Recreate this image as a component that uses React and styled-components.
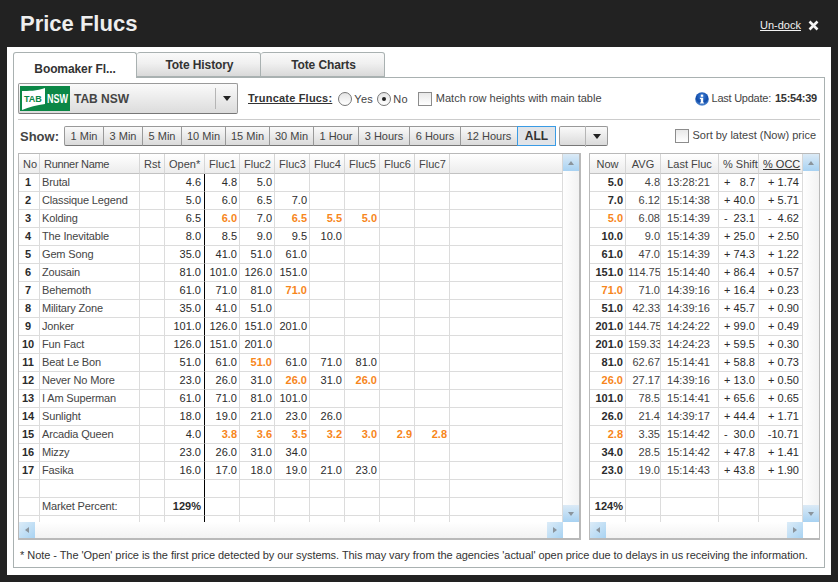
import React from 'react';
import styled, { createGlobalStyle, css } from 'styled-components';

const GlobalStyle = createGlobalStyle`
  html, body { margin: 0; padding: 0; background: #222; }
  body { font-family: "Liberation Sans", Arial, sans-serif; font-size: 11px; color: #333; }
`;

const Page = styled.div`
  width: 838px;
  height: 582px;
  background: #222;
  overflow: hidden;
`;

const Header = styled.header`
  height: 47px;
  display: flex;
  align-items: center;
  justify-content: space-between;
  padding: 0 19px 0 20px;
  box-sizing: border-box;
`;

const Title = styled.h1`
  margin: 1px 0 0;
  font-size: 22px;
  font-weight: bold;
  color: #eee;
`;

const HeaderActions = styled.div`
  display: flex;
  align-items: center;
  gap: 7px;
  margin-top: 3px;
`;

const UndockLink = styled.a`
  color: #f2f2f2;
  font-size: 11px;
  text-decoration: underline;
`;

const Panel = styled.main`
  width: 824px;
  height: 528px;
  margin-left: 7px;
  padding: 5px 6px 7px;
  box-sizing: border-box;
  background: #fff;
  display: flex;
  flex-direction: column;
`;

const TabBar = styled.div`
  display: flex;
  height: 25px;
  flex: none;
  position: relative;
  z-index: 1;
`;

const Tab = styled.div`
  width: 124px;
  box-sizing: border-box;
  text-align: center;
  font-size: 12px;
  font-weight: bold;
  letter-spacing: -0.1px;
  color: #333;
  border: 1px solid #a9b1b1;
  border-radius: 3px 3px 0 0;
  white-space: nowrap;
  ${(p) => (p.$active
    ? css`
      height: 26px;
      padding-top: 9px;
      background: #fff;
      border-bottom: none;
    `
    : css`
      height: 25px;
      padding: 5px 0 0 2px;
      border-left: none;
      background: linear-gradient(#fafafa, #f0f0f0 45%, #d9d9d9);
    `)}
`;

const TabBody = styled.section`
  flex: 1;
  min-height: 0;
  border: 1px solid #a9b1b1;
  padding: 5px 4px 0;
  display: flex;
  flex-direction: column;
`;

const OptionsRow = styled.div`
  height: 31px;
  display: flex;
  align-items: center;
  flex: none;
`;

const BookieSelect = styled.div`
  width: 220px;
  height: 31px;
  box-sizing: border-box;
  border: 1px solid #9a9a9a;
  border-bottom-color: #777;
  border-radius: 2px;
  background: linear-gradient(#fafafa, #dcdcdc);
  display: flex;
  align-items: center;
  padding-left: 1px;
  gap: 4px;
`;

const BookieName = styled.span`
  flex: 1;
  font-size: 12px;
  font-weight: bold;
  color: #444;
`;

const SelectArrow = styled.span`
  width: 21px;
  height: 21px;
  border-left: 1px solid #b5b5b5;
  display: flex;
  align-items: center;
  justify-content: center;
  &::after {
    content: '';
    border-left: 4px solid transparent;
    border-right: 4px solid transparent;
    border-top: 5px solid #222;
  }
`;

const TruncateLabel = styled.span`
  margin: 0 0 1px 10px;
  font-weight: bold;
  font-size: 11px;
  letter-spacing: 0.2px;
  color: #333;
  text-decoration: underline;
`;

const Radio = styled.span`
  width: 12px;
  height: 12px;
  margin: 0 2px 0 ${(p) => (p.$checked ? 4 : 6)}px;
  border: 1px solid #777;
  border-radius: 50%;
  background: linear-gradient(#e4e4e4, #fff);
  display: inline-flex;
  align-items: center;
  justify-content: center;
  ${(p) => p.$checked && css`
    &::after {
      content: '';
      width: 4px;
      height: 4px;
      border-radius: 50%;
      background: #222;
    }
  `}
`;

const Check = styled.span`
  width: 12px;
  height: 12px;
  flex: none;
  border: 1px solid #8c8c8c;
  background: linear-gradient(#e8e8e8, #fff);
  margin-right: 4px;
`;

const OptionText = styled.span`
  color: #444;
  font-size: 11px;
  white-space: nowrap;
  margin-bottom: 2px;
`;

const RadioText = styled(OptionText)`
  letter-spacing: 0.3px;
  margin-bottom: 0;
`;

const UpdateLabel = styled(OptionText)`
  letter-spacing: -0.25px;
`;

const MatchOption = styled.div`
  display: flex;
  align-items: center;
  margin-left: 10px;
`;

const LastUpdate = styled.div`
  margin-left: auto;
  margin-right: 3px;
  display: flex;
  align-items: center;
  gap: 3px;
`;

const UpdateTime = styled.b`
  font-size: 11px;
  letter-spacing: -0.25px;
  color: #333;
  margin: 0 0 2px 1px;
`;

const Divider = styled.hr`
  flex: none;
  width: 100%;
  margin: 5px 0 6px;
  border: none;
  border-top: 1px solid #ccc;
`;

const ShowRow = styled.div`
  height: 20px;
  flex: none;
  display: flex;
  align-items: center;
`;

const ShowLabel = styled.span`
  width: 46px;
  padding-left: 2px;
  box-sizing: border-box;
  font-size: 13px;
  font-weight: bold;
  color: #444;
`;

const RangeGroup = styled.div`
  display: flex;
  height: 20px;
`;

const RangeButton = styled.div`
  width: ${(p) => p.$w}px;
  box-sizing: border-box;
  display: flex;
  align-items: center;
  justify-content: center;
  border: 1px solid #999;
  border-bottom-color: #777;
  margin-left: -1px;
  background: linear-gradient(#fafafa, #dadada);
  font-size: 11px;
  color: #444;
  &:first-child { margin-left: 0; border-radius: 2px 0 0 2px; }
  ${(p) => p.$active && css`
    position: relative;
    border-color: #3a9be4;
    background: #e1e4e8;
    font-weight: bold;
    font-size: 12px;
    color: #333;
  `}
`;

const RangeSelect = styled.div`
  width: 49px;
  height: 20px;
  box-sizing: border-box;
  margin-left: 3px;
  border: 1px solid #999;
  border-bottom-color: #777;
  border-radius: 2px;
  background: linear-gradient(#fafafa, #dadada);
  display: flex;
  align-items: center;
  justify-content: flex-end;
`;

const SortOption = styled.div`
  margin-left: auto;
  margin-right: 4px;
  display: flex;
  align-items: center;
`;

const GridsRow = styled.div`
  height: 387px;
  flex: none;
  margin-top: 7px;
  display: flex;
  gap: 8px;
`;

const GridFrame = styled.div`
  width: ${(p) => p.$w}px;
  box-sizing: border-box;
  border: 1px solid #b9b9b9;
  border-right-width: ${(p) => p.$edge}px;
  border-bottom-width: 2px;
  display: grid;
  grid-template-columns: 1fr 16px;
  grid-template-rows: 1fr 16px;
`;

const Viewport = styled.div`
  overflow: hidden;
  min-width: 0;
  min-height: 0;
`;

const Table = styled.table`
  width: 100%;
  table-layout: fixed;
  border-collapse: separate;
  border-spacing: 0;
  font-size: 11px;
`;

const HeadCell = styled.th`
  height: 20px;
  padding: 0 4px;
  box-sizing: border-box;
  overflow: hidden;
  white-space: nowrap;
  font-weight: normal;
  text-align: ${(p) => p.$align || 'center'};
  letter-spacing: ${(p) => (p.$align === 'left' ? '-0.3px' : 'normal')};
  color: #444;
  background: linear-gradient(#fff, #ececec);
  border-right: 1px solid #d6d6d6;
  border-bottom: 1px solid #c2c2c2;
  ${(p) => p.$underline && css`
    text-decoration: underline;
    color: #333;
  `}
`;

const Cell = styled.td`
  height: 18px;
  padding: 0 2px 2px 0;
  box-sizing: border-box;
  overflow: hidden;
  white-space: nowrap;
  text-align: ${(p) => p.$align || 'right'};
  color: ${(p) => p.$color || '#2b2b2b'};
  font-weight: ${(p) => (p.$bold ? 'bold' : 'normal')};
  border-right: 1px solid ${(p) => (p.$line ? '#000' : '#dcdcdc')};
  border-bottom: 1px solid #dcdcdc;
`;

const NameCell = styled(Cell)`
  padding-left: 2px;
  text-align: left;
  letter-spacing: -0.15px;
`;

const PadCell = styled(Cell)`
  padding-right: 3px;
  text-align: right;
`;

const AvgCell = styled(Cell)`
  padding: 0 0 2px 2px;
  text-align: right;
  color: #444;
  text-overflow: clip;
`;

const ChangeCell = styled(Cell)`
  padding: 0 3px 2px ${(p) => p.$lead}px;
`;

const ChangeInner = styled.div`
  display: flex;
  justify-content: ${(p) => (p.$sign ? 'space-between' : 'flex-end')};
`;

const HiddenRowCell = styled(Cell)`
  height: 8px;
  padding: 0;
  border-bottom: none;
`;

const ScrollTrack = styled.div`
  background: ${(p) => (p.$horizontal
    ? 'linear-gradient(#fff, #f2f2f2)'
    : 'linear-gradient(90deg, #fff, #f2f2f2)')};
  display: flex;
  flex-direction: ${(p) => (p.$horizontal ? 'row' : 'column')};
  justify-content: space-between;
  min-width: 0;
  min-height: 0;
`;

const ScrollButton = styled.div`
  width: 16px;
  height: ${(p) => (p.$horizontal ? '16px' : '17px')};
  flex: none;
  background: ${(p) => (p.$horizontal
    ? 'linear-gradient(135deg, #dcecf8, #a9d3f2)'
    : 'linear-gradient(#dbeaf6, #a8d2f2)')};
  display: flex;
  align-items: center;
  justify-content: center;
  &::after {
    content: '';
    ${(p) => {
    const side = '3px solid transparent';
    const tip = '4px solid #8a949c';
    if (p.$dir === 'up') return `border-left:${side};border-right:${side};border-bottom:${tip};`;
    if (p.$dir === 'down') return `border-left:${side};border-right:${side};border-top:${tip};`;
    if (p.$dir === 'left') return `border-top:${side};border-bottom:${side};border-right:${tip};`;
    return `border-top:${side};border-bottom:${side};border-left:${tip};`;
  }}
  }
`;

const Corner = styled.div`
  background: #fff;
`;

const Note = styled.p`
  margin: 9px 0 0 2px;
  font-size: 11px;
  letter-spacing: -0.05px;
  color: #333;
  white-space: nowrap;
`;

const ORANGE = '#f7861b';
const up = (v) => ({ v, hot: true });

const runners = [
  ['Brutal', '4.6', ['4.8', '5.0'], '5.0', '4.8', '13:28:21', '+', '8.7', '+', '1.74'],
  ['Classique Legend', '5.0', ['6.0', '6.5', '7.0'], '7.0', '6.12', '15:14:38', '+', '40.0', '+', '5.71'],
  ['Kolding', '6.5', [up('6.0'), '7.0', up('6.5'), up('5.5'), up('5.0')], up('5.0'), '6.08', '15:14:39', '-', '23.1', '-', '4.62'],
  ['The Inevitable', '8.0', ['8.5', '9.0', '9.5', '10.0'], '10.0', '9.0', '15:14:39', '+', '25.0', '+', '2.50'],
  ['Gem Song', '35.0', ['41.0', '51.0', '61.0'], '61.0', '47.0', '15:14:39', '+', '74.3', '+', '1.22'],
  ['Zousain', '81.0', ['101.0', '126.0', '151.0'], '151.0', '114.75', '15:14:40', '+', '86.4', '+', '0.57'],
  ['Behemoth', '61.0', ['71.0', '81.0', up('71.0')], up('71.0'), '71.0', '14:39:16', '+', '16.4', '+', '0.23'],
  ['Military Zone', '35.0', ['41.0', '51.0'], '51.0', '42.33', '14:39:16', '+', '45.7', '+', '0.90'],
  ['Jonker', '101.0', ['126.0', '151.0', '201.0'], '201.0', '144.75', '14:24:22', '+', '99.0', '+', '0.49'],
  ['Fun Fact', '126.0', ['151.0', '201.0'], '201.0', '159.33', '14:24:23', '+', '59.5', '+', '0.30'],
  ['Beat Le Bon', '51.0', ['61.0', up('51.0'), '61.0', '71.0', '81.0'], '81.0', '62.67', '15:14:41', '+', '58.8', '+', '0.73'],
  ['Never No More', '23.0', ['26.0', '31.0', up('26.0'), '31.0', up('26.0')], up('26.0'), '27.17', '14:39:16', '+', '13.0', '+', '0.50'],
  ['I Am Superman', '61.0', ['71.0', '81.0', '101.0'], '101.0', '78.5', '15:14:41', '+', '65.6', '+', '0.65'],
  ['Sunlight', '18.0', ['19.0', '21.0', '23.0', '26.0'], '26.0', '21.4', '14:39:17', '+', '44.4', '+', '1.71'],
  ['Arcadia Queen', '4.0', [up('3.8'), up('3.6'), up('3.5'), up('3.2'), up('3.0'), up('2.9'), up('2.8')], up('2.8'), '3.35', '15:14:42', '-', '30.0', '', '-10.71'],
  ['Mizzy', '23.0', ['26.0', '31.0', '34.0'], '34.0', '28.5', '15:14:42', '+', '47.8', '+', '1.41'],
  ['Fasika', '16.0', ['17.0', '18.0', '19.0', '21.0', '23.0'], '23.0', '19.0', '15:14:43', '+', '43.8', '+', '1.90'],
];

const ranges = [
  ['1 Min', 40], ['3 Min', 40], ['5 Min', 40], ['10 Min', 45], ['15 Min', 45], ['30 Min', 45],
  ['1 Hour', 46], ['3 Hours', 52], ['6 Hours', 52], ['12 Hours', 58], ['ALL', 39],
];

const flucCols = [1, 2, 3, 4, 5, 6, 7];

const TabLogo = () => (
  <svg width="50" height="25" viewBox="0 0 50 25">
    <rect width="50" height="25" fill="#0b8746" />
    <path d="M2 5 C8 5 17 5 25 2 L25 18 C17 19 9 21 2 24 Z" fill="#fff" />
    <text x="4" y="15.5" fontFamily="Liberation Sans" fontWeight="bold" fontSize="9" fill="#0b8746">TAB</text>
    <text transform="translate(27 16.5) scale(1 1.35)" fontFamily="Liberation Sans" fontWeight="bold" fontSize="9" fill="#fff">NSW</text>
  </svg>
);

const InfoIcon = () => (
  <svg width="14" height="14" viewBox="0 0 14 14">
    <defs>
      <radialGradient id="infoBlue" cx="50%" cy="30%" r="75%">
        <stop offset="0%" stopColor="#3f7fd6" />
        <stop offset="60%" stopColor="#0f4aa8" />
        <stop offset="100%" stopColor="#6fa5e4" />
      </radialGradient>
    </defs>
    <circle cx="7" cy="7" r="6.8" fill="url(#infoBlue)" />
    <rect x="5.8" y="2.6" width="2.4" height="2.2" fill="#fff" />
    <path d="M4.9 5.8 H8.2 V10.4 H9.1 V11.6 H4.9 V10.4 H5.8 V7 H4.9 Z" fill="#fff" />
  </svg>
);

const CloseIcon = () => (
  <svg width="11" height="11" viewBox="0 0 11 11">
    <path d="M1.5 1.5 L9.5 9.5 M9.5 1.5 L1.5 9.5" stroke="#f4f4f4" strokeWidth="2.6" fill="none" />
  </svg>
);

const show = (value) => (value && value.hot ? value.v : value);
const tone = (value) => (value && value.hot ? { $color: ORANGE, $bold: true } : {});

const Scrollbars = () => (
  <>
    <ScrollTrack>
      <ScrollButton $dir="up" />
      <ScrollButton $dir="down" />
    </ScrollTrack>
    <ScrollTrack $horizontal>
      <ScrollButton $horizontal $dir="left" />
      <ScrollButton $horizontal $dir="right" />
    </ScrollTrack>
    <Corner />
  </>
);

const EmptyMainRow = ({ market }) => (
  <tr>
    <Cell />
    <NameCell $color="#444">{market && 'Market Percent:'}</NameCell>
    <Cell />
    <PadCell $line $bold={market}>{market && '129%'}</PadCell>
    {flucCols.map((n) => <Cell key={n} />)}
    <Cell />
  </tr>
);

const MainGrid = () => (
  <GridFrame $w={563} $edge={2}>
    <Viewport>
      <Table>
        <colgroup>
          <col width="21" />
          <col width="100" />
          <col width="25" />
          <col width="40" />
          {flucCols.map((n) => <col key={n} width="35" />)}
          <col />
        </colgroup>
        <thead>
          <tr>
            <HeadCell>No</HeadCell>
            <HeadCell $align="left">Runner Name</HeadCell>
            <HeadCell>Rst</HeadCell>
            <HeadCell>Open*</HeadCell>
            {flucCols.map((n) => <HeadCell key={n}>{`Fluc${n}`}</HeadCell>)}
            <HeadCell />
          </tr>
        </thead>
        <tbody>
          {runners.map((r, i) => (
            <tr key={r[0]}>
              <Cell $align="center" $bold>{i + 1}</Cell>
              <NameCell $color="#444">{r[0]}</NameCell>
              <Cell />
              <PadCell $line>{r[1]}</PadCell>
              {flucCols.map((n) => (
                <Cell key={n} {...tone(r[2][n - 1])}>{show(r[2][n - 1])}</Cell>
              ))}
              <Cell />
            </tr>
          ))}
          <EmptyMainRow />
          <EmptyMainRow market />
          <tr>
            <HiddenRowCell />
            <HiddenRowCell />
            <HiddenRowCell />
            <HiddenRowCell $line />
            {flucCols.map((n) => <HiddenRowCell key={n} />)}
            <HiddenRowCell />
          </tr>
        </tbody>
      </Table>
    </Viewport>
    <Scrollbars />
  </GridFrame>
);

const SummaryGrid = () => (
  <GridFrame $w={231} $edge={1}>
    <Viewport>
      <Table>
        <colgroup>
          <col width="36" />
          <col width="35" />
          <col width="58" />
          <col width="40" />
          <col />
        </colgroup>
        <thead>
          <tr>
            <HeadCell>Now</HeadCell>
            <HeadCell>AVG</HeadCell>
            <HeadCell>Last Fluc</HeadCell>
            <HeadCell>% Shift</HeadCell>
            <HeadCell $underline>% OCC</HeadCell>
          </tr>
        </thead>
        <tbody>
          {runners.map((r) => (
            <tr key={r[0]}>
              <Cell $bold {...tone(r[3])}>{show(r[3])}</Cell>
              <AvgCell>{r[4]}</AvgCell>
              <Cell $align="center" $color="#444">{r[5]}</Cell>
              <ChangeCell $lead={5}>
                <ChangeInner $sign><span>{r[6]}</span><span>{r[7]}</span></ChangeInner>
              </ChangeCell>
              <ChangeCell $lead={9}>
                <ChangeInner $sign={r[8] !== ''}>
                  {r[8] !== '' && <span>{r[8]}</span>}
                  <span>{r[9]}</span>
                </ChangeInner>
              </ChangeCell>
            </tr>
          ))}
          <tr>
            {[0, 1, 2, 3, 4].map((n) => <Cell key={n} />)}
          </tr>
          <tr>
            <Cell $bold>124%</Cell>
            {[1, 2, 3, 4].map((n) => <Cell key={n} />)}
          </tr>
          <tr>
            {[0, 1, 2, 3, 4].map((n) => <HiddenRowCell key={n} />)}
          </tr>
        </tbody>
      </Table>
    </Viewport>
    <Scrollbars />
  </GridFrame>
);

export default function App() {
  return (
    <Page>
      <GlobalStyle />
      <Header>
        <Title>Price Flucs</Title>
        <HeaderActions>
          <UndockLink href="#undock">Un-dock</UndockLink>
          <CloseIcon />
        </HeaderActions>
      </Header>
      <Panel>
        <TabBar>
          <Tab $active>Boomaker Fl...</Tab>
          <Tab>Tote History</Tab>
          <Tab>Tote Charts</Tab>
        </TabBar>
        <TabBody>
          <OptionsRow>
            <BookieSelect>
              <TabLogo />
              <BookieName>TAB NSW</BookieName>
              <SelectArrow />
            </BookieSelect>
            <TruncateLabel>Truncate Flucs:</TruncateLabel>
            <Radio />
            <RadioText>Yes</RadioText>
            <Radio $checked />
            <RadioText>No</RadioText>
            <MatchOption>
              <Check />
              <OptionText>Match row heights with main table</OptionText>
            </MatchOption>
            <LastUpdate>
              <InfoIcon />
              <UpdateLabel>Last Update:</UpdateLabel>
              <UpdateTime>15:54:39</UpdateTime>
            </LastUpdate>
          </OptionsRow>
          <Divider />
          <ShowRow>
            <ShowLabel>Show:</ShowLabel>
            <RangeGroup>
              {ranges.map(([label, w]) => (
                <RangeButton key={label} $w={w} $active={label === 'ALL'}>{label}</RangeButton>
              ))}
            </RangeGroup>
            <RangeSelect><SelectArrow /></RangeSelect>
            <SortOption>
              <Check />
              <OptionText>Sort by latest (Now) price</OptionText>
            </SortOption>
          </ShowRow>
          <GridsRow>
            <MainGrid />
            <SummaryGrid />
          </GridsRow>
          <Note>* Note - The 'Open' price is the first price detected by our systems. This may vary from the agencies 'actual' open price due to delays in us receiving the information.</Note>
        </TabBody>
      </Panel>
    </Page>
  );
}
